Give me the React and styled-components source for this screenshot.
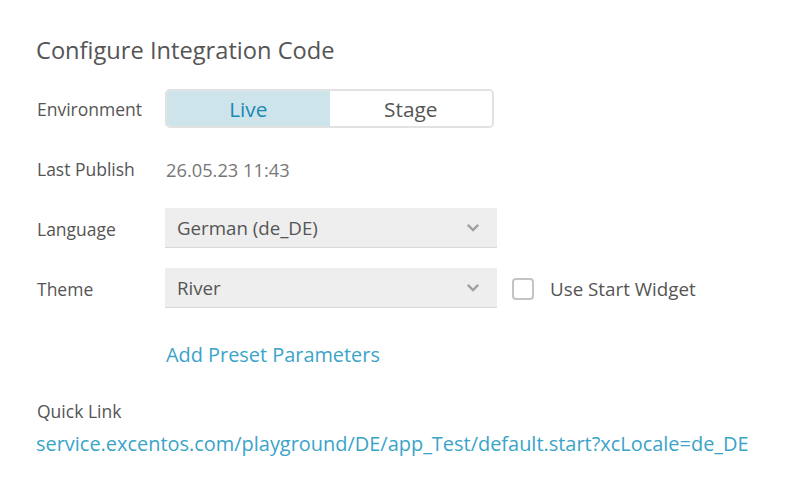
import React, { useState } from "react";
import styled, { createGlobalStyle } from "styled-components";

const Global = createGlobalStyle`
  html, body { margin: 0; padding: 0; background: #fff; }
  body { font-family: "Open Sans", "Noto Sans", sans-serif; color: #555; }
`;

const Page = styled.div`
  padding: 35px 36px 0 36px;
`;

const Title = styled.h1`
  margin: 0 0 14px 0;
  font-size: 23.65px;
  font-weight: 400;
  color: #555;
  line-height: 30px;
`;

const Form = styled.div`
  display: grid;
  grid-template-columns: 129px auto 1fr;
  grid-template-rows: 60px 60px 60px 60px 70px;
  align-items: center;
`;

const Label = styled.div`
  font-size: 17.5px;
  color: #555;
  padding-left: 1px;
`;

const Segmented = styled.div`
  display: flex;
  width: 329px;
  height: 39px;
  margin-top: -1px;
  box-sizing: border-box;
  border: 2px solid #e2e2e2;
  border-radius: 5px;
  overflow: hidden;
`;

const Segment = styled.button`
  flex: 1;
  border: none;
  margin: 0;
  padding: 0;
  font-family: inherit;
  font-size: 20.8px;
  background: ${(p) => (p.$active ? "#cde4eb" : "#fff")};
  color: ${(p) => (p.$active ? "#1b89b4" : "#555")};
  cursor: pointer;
`;

const Value = styled.div`
  font-size: 18.3px;
  color: #777;
  padding-left: 1px;
`;

const Select = styled.div`
  display: flex;
  align-items: center;
  justify-content: space-between;
  width: 332px;
  height: 40px;
  margin-top: -3px;
  box-sizing: border-box;
  padding: 0 17px 0 12px;
  background: #eee;
  border-bottom: 1px solid #d8d8d8;
  font-size: 18.7px;
  color: #555;
`;

const Chevron = () => (
  <svg width="14" height="9" viewBox="0 0 14 9">
    <path d="M1.8 1.8 L7 7 L12.2 1.8" fill="none" stroke="#a0a0a0" strokeWidth="2.4" />
  </svg>
);

const CheckWrap = styled.label`
  display: flex;
  align-items: center;
  gap: 16px;
  margin-left: 15px;
  font-size: 18.8px;
  color: #555;
`;

const Box = styled.span`
  width: 22px;
  height: 22px;
  box-sizing: border-box;
  border: 2px solid #c4c4c4;
  border-radius: 4px;
  background: #fff;
`;

const LinkText = styled.a`
  font-size: 19.9px;
  color: #3aa4c9;
  text-decoration: none;
  padding-left: 1px;
`;

const QuickLabel = styled.div`
  margin-top: 10px;
  font-size: 17.5px;
  color: #555;
  padding-left: 1px;
`;

const Url = styled.a`
  display: block;
  margin-top: 7px;
  font-size: 19.95px;
  color: #3aa4c9;
  text-decoration: none;
`;

export default function App() {
  const [env, setEnv] = useState("live");
  return (
    <Page>
      <Global />
      <Title>Configure Integration Code</Title>
      <Form>
        <Label>Environment</Label>
        <Segmented>
          <Segment $active={env === "live"} onClick={() => setEnv("live")}>Live</Segment>
          <Segment $active={env === "stage"} onClick={() => setEnv("stage")}>Stage</Segment>
        </Segmented>
        <span />

        <Label>Last Publish</Label>
        <Value>26.05.23 11:43</Value>
        <span />

        <Label>Language</Label>
        <Select>
          German (de_DE)
          <Chevron />
        </Select>
        <span />

        <Label>Theme</Label>
        <Select>
          River
          <Chevron />
        </Select>
        <CheckWrap>
          <Box />
          Use Start Widget
        </CheckWrap>

        <span />
        <LinkText href="#">Add Preset Parameters</LinkText>
        <span />
      </Form>
      <QuickLabel>Quick Link</QuickLabel>
      <Url href="#">service.excentos.com/playground/DE/app_Test/default.start?xcLocale=de_DE</Url>
    </Page>
  );
}
